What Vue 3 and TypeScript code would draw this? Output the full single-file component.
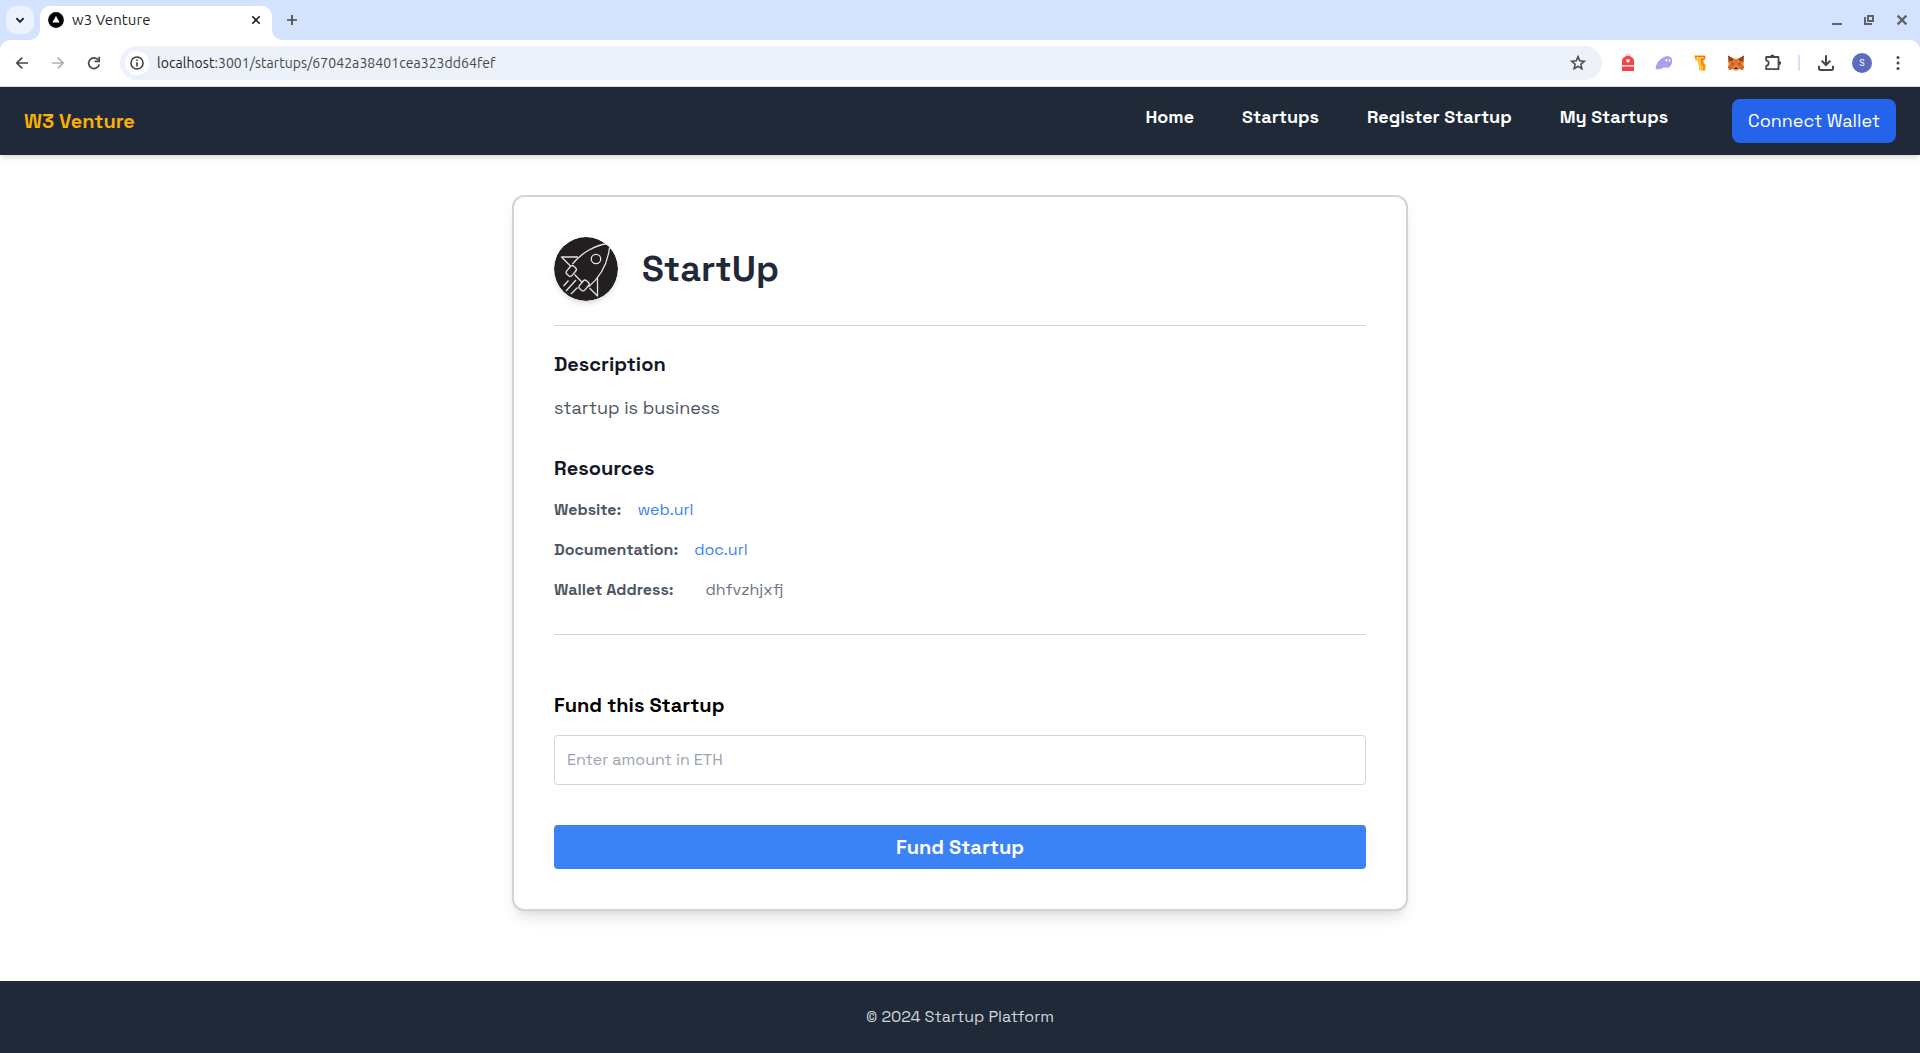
<script setup lang="ts">
import { ref } from 'vue'

const links: string[] = ['Home', 'Startups', 'Register Startup', 'My Startups']

const amount = ref('')
</script>

<template>
  <div class="window">
    <div class="tabstrip">
      <button class="tab-search" aria-label="Search tabs">
        <svg width="12" height="12" viewBox="0 0 12 12"><path d="M2.4 4.2 6 7.8l3.6-3.6" fill="none" stroke="#1f1f1f" stroke-width="1.9" /></svg>
      </button>
      <div class="tab">
        <svg class="favicon" width="16" height="16" viewBox="0 0 16 16"><circle cx="8" cy="8" r="7.9" fill="#000" /><path d="M8 4.1 11.7 10.6H4.3Z" fill="#fff" /></svg>
        <span class="tab-title">w3 Venture</span>
        <svg class="tab-close" width="12" height="12" viewBox="0 0 12 12"><path d="m2.3 2.3 7.4 7.4M9.7 2.3 2.3 9.7" stroke="#1f1f1f" stroke-width="1.6" /></svg>
      </div>
      <svg class="new-tab" width="12" height="12" viewBox="0 0 12 12"><path d="M6 1v10M1 6h10" stroke="#474747" stroke-width="1.7" /></svg>
      <div class="controls">
        <svg width="12" height="12" viewBox="0 0 12 12"><path d="M1 10h10" stroke="#5f6368" stroke-width="2" /></svg>
        <svg width="12" height="12" viewBox="0 0 12 12"><path d="M5 2h5v5H5Z" fill="none" stroke="#5f6368" stroke-width="2" /><path d="M2 3v7h7" fill="none" stroke="#5f6368" stroke-width="2" /></svg>
        <svg width="12" height="12" viewBox="0 0 12 12"><path d="m1.600 1.600 8.800 8.800M10.400 1.600 1.600 10.400" stroke="#5f6368" stroke-width="2.200" /></svg>
      </div>
    </div>

    <div class="toolbar-wrap">
      <div class="toolbar">
        <span class="slot"><svg width="16" height="16" viewBox="0 0 16 16"><path d="M14 8H3M8.200 2.600 2.800 8l5.400 5.400" fill="none" stroke="#474747" stroke-width="1.700" /></svg></span>
        <span class="slot"><svg width="16" height="16" viewBox="0 0 16 16"><path d="M2 8h11M7.800 2.600 13.200 8l-5.400 5.400" fill="none" stroke="#b0b0b0" stroke-width="1.700" /></svg></span>
        <span class="slot"><svg width="16" height="16" viewBox="0 0 16 16"><path d="M12.400 5A5.400 5.400 0 1 0 13.300 9.400" fill="none" stroke="#474747" stroke-width="1.700" /><path d="M13.200 1.700v4.600H8.600" fill="none" stroke="#474747" stroke-width="1.700" /></svg></span>
        <div class="omnibox">
          <span class="info"><svg width="16" height="16" viewBox="0 0 16 16"><circle cx="8" cy="8" r="6.100" fill="none" stroke="#3c3c3c" stroke-width="1.500" /><path d="M8 7.200v4.200M8 4.400v1.600" stroke="#3c3c3c" stroke-width="1.600" /></svg></span>
          <span class="url"><span class="host">localhost</span>:3001/startups/67042a38401cea323dd64fef</span>
          <svg class="star" width="18" height="18" viewBox="0 0 18 18"><path d="m9 2.600 1.750 4.250 4.550.4-3.450 3 1.050 4.450L9 12.300l-3.900 2.400 1.050-4.450-3.450-3 4.550-.4Z" fill="none" stroke="#474747" stroke-width="1.500" /></svg>
        </div>
        <span class="slot"><svg width="16" height="18" viewBox="0 0 16 18"><path d="M5.500 1h5" stroke="#f08a90" stroke-width="1" /><path d="M2 11V7.500C2 4.800 3.500 3 5.500 2.800V2h5v.8C12.500 3 14 4.800 14 7.500V11Z" fill="#f4434a" /><path d="M2 12.500h12V17H2Z" fill="#f4434a" /><circle cx="8" cy="6.700" r="1.800" fill="#fff" /><path d="M2 11.700h12" stroke="#f9c3c6" stroke-width="1" /></svg></span>
        <span class="slot"><svg width="18" height="16" viewBox="0 0 18 16"><path d="M17.200 5.500c0 5-3.200 7.700-5.200 7.400-.8-.1-1-.7-1.200-1.100-.9 1.300-2 1.600-2.900.8-.9 1.300-1.800 1.900-2.800 1.100-1.400 1.200-4.400 1.300-4.400-1.100C.7 8.500 6.300 1.200 12.500 1.200c3 0 4.700 1.700 4.700 4.300Z" fill="#ab9ff2" /><ellipse cx="11.300" cy="5.300" rx=".9" ry="1.300" fill="#fff" /><ellipse cx="14.500" cy="5.300" rx=".9" ry="1.300" fill="#fff" /></svg></span>
        <span class="slot"><svg width="16" height="18" viewBox="0 0 16 18"><path d="M2.500 1.500h11l-.4 4-1.500.8.2 2.700 1.900 1.600-.4 6H7.500L7 11.800l-.9-2.300.4-2.500-3.500-.9Z" fill="#ffa51f" /><path d="m3 2.300 9.800.2-.6 2.300-2.400.6.300 4.500 2 1.600-.4 4.400" fill="none" stroke="#f9652a" stroke-width="1" /><path d="m3.800 4.800 4.200.5-.3 4.500 1.100 5.800M5 3.500l6.300.2M10.200 11.500l.4 4" fill="none" stroke="#ffe03b" stroke-width="1.100" /></svg></span>
        <span class="slot"><svg width="18" height="18" viewBox="0 0 18 18"><path d="m1 1.500 5.700 3.200h4.600L17 1.500v6l-.9 2.900.9 3-1.300 2.600-3.400-1-2 1.600H7.700l-2-1.600-3.400 1L1 13.400l.9-3L1 7.500Z" fill="#e8752b" /><path d="m1 1.500 5.700 3.200L5 7.400 2 7ZM17 1.500l-5.700 3.200L13 7.400l3-.4Z" fill="#8a4a2a" /><path d="m1.900 10.400 3.300.3.500 4-3.400 1.300L1 13.400ZM16.100 10.400l-3.300.3-.5 4 3.400 1.300 1.300-2.600Z" fill="#d96a22" /><path d="m5 9 2.200 1-1.800.8ZM13 9l-2.200 1 1.800.8Z" fill="#233447" /><path d="M7.200 12.800h3.600l.4 2-1 .8H7.800l-1-.8Z" fill="#d9c7b6" /><path d="M7.600 13.500h2.800l.3 1.500H7.300Z" fill="#161616" /></svg></span>
        <span class="slot"><svg class="puzzle" width="20" height="20" viewBox="0 0 20 20"><path d="M3.200 4h12.300v12.200H3.200v-3.400c3.300-.6 3.300-4.800 0-5.400Z" fill="none" stroke="#474747" stroke-width="1.800" stroke-linejoin="round" /><path d="M7.200 3.500a2.100 2.100 0 0 1 4.200 0ZM16 8a2.100 2.100 0 0 1 0 4.200Z" fill="#474747" /></svg></span>
        <span class="slot sep"><i></i></span>
        <span class="slot"><svg width="18" height="18" viewBox="0 0 18 18"><path d="M9 1.200v9.600M4.700 6.700 9 11l4.300-4.300" fill="none" stroke="#474747" stroke-width="2" /><path d="M2 11.700v2.800a1.400 1.400 0 0 0 1.400 1.400h11.200a1.400 1.400 0 0 0 1.400-1.400v-2.800" fill="none" stroke="#474747" stroke-width="2" /></svg></span>
        <span class="slot"><span class="avatar">S</span></span>
        <span class="slot"><svg width="4" height="16" viewBox="0 0 4 16"><circle cx="2" cy="2.500" r="1.500" fill="#474747" /><circle cx="2" cy="8" r="1.500" fill="#474747" /><circle cx="2" cy="13.500" r="1.500" fill="#474747" /></svg></span>
      </div>
    </div>

    <header class="navbar">
      <a class="brand">W3 Venture</a>
      <nav class="links">
        <a v-for="link in links" :key="link">{{ link }}</a>
      </nav>
      <button class="connect">Connect Wallet</button>
    </header>

    <main class="page">
      <section class="card">
        <div class="head">
          <svg class="logo" width="64" height="64" viewBox="0 0 64 64">
            <circle cx="32" cy="32" r="32" fill="#231f20" />
            <g fill="none" stroke="#e4e4e4" stroke-width="1.300" stroke-linejoin="round">
              <path d="M18.500 27C27 16.500 40 8.500 53.500 6.500" />
              <path d="M55.500 10.500C53.800 25 47 39.500 34.500 50" />
              <path d="M24 20H7.500l8.700 8.700" />
              <path d="M43.500 41v18L35.500 51" />
              <path d="m20.500 37.500 8 8.200" />
              <rect x="12" y="30.500" width="10.500" height="7" rx="2.400" transform="rotate(-50 17.200 34)" />
              <rect x="24.800" y="45" width="10.500" height="7" rx="2.400" transform="rotate(-50 30 48.500)" />
              <circle cx="42" cy="22" r="4.700" />
              <path d="m14.500 43.500-5 5.500M22 43 12 54M23.500 50.500 17 57" />
            </g>
          </svg>
          <h1>StartUp</h1>
        </div>

        <h2 class="t-description">Description</h2>
        <p class="description">startup is business</p>

        <h2 class="t-resources">Resources</h2>
        <div class="rows">
          <div class="row"><strong>Website:</strong><a>web.url</a></div>
          <div class="row"><strong>Documentation:</strong><a>doc.url</a></div>
          <div class="row"><strong>Wallet Address:</strong><span class="wallet">dhfvzhjxfj</span></div>
        </div>

        <form class="fund" @submit.prevent>
          <h2>Fund this Startup</h2>
          <input v-model="amount" type="text" placeholder="Enter amount in ETH" />
          <button type="submit">Fund Startup</button>
        </form>
      </section>
    </main>

    <footer class="footer">© 2024 Startup Platform</footer>
  </div>
</template>

<style>
body {
  margin: 0;
  background: #fff;
  overflow: hidden;
}
</style>

<style scoped>
* {
  box-sizing: border-box;
}
.window {
  display: flex;
  flex-direction: column;
  height: 1053px;
  font-family: "Space Grotesk", Inter, "Liberation Sans", sans-serif;
  font-size: 16px;
  line-height: 24px;
  color: #000;
}
svg {
  display: block;
  flex: none;
}
h1, h2, p {
  margin: 0;
}
button, input {
  font-family: inherit;
  border: 0;
}

/* browser frame */
.tabstrip {
  display: flex;
  height: 40px;
  padding: 6px 12px 0 6px;
  background: #d3e2fd;
}
.tab-search {
  display: grid;
  place-items: center;
  width: 28px;
  height: 28px;
  padding: 0;
  border-radius: 10px;
  background: #ecf2fe;
}
.tab {
  position: relative;
  display: flex;
  align-items: center;
  width: 232px;
  height: 34px;
  margin-left: 6px;
  padding: 0 10px 6px 8px;
  border-radius: 10px 10px 0 0;
  background: #fff;
}
.tab::before,
.tab::after {
  content: "";
  position: absolute;
  bottom: 0;
  width: 10px;
  height: 10px;
}
.tab::before {
  left: -10px;
  background: radial-gradient(circle at 0 0, transparent 9.5px, #fff 10px);
}
.tab::after {
  right: -10px;
  background: radial-gradient(circle at 100% 0, transparent 9.5px, #fff 10px);
}
.tab-title {
  flex: 1;
  margin-left: 8px;
  font: 15px/20px Ubuntu, "Noto Sans", sans-serif;
  letter-spacing: 0.08px;
  color: #1f1f1f;
}
.new-tab {
  margin: 8px 0 0 14px;
}
.controls {
  display: flex;
  gap: 20px;
  margin: 8px 0 0 auto;
}
.controls svg:last-child {
  margin-left: 1px;
}
.toolbar-wrap {
  background: #d3e2fd;
}
.toolbar {
  display: flex;
  align-items: center;
  height: 47px;
  padding: 0 4px;
  border-bottom: 1px solid #dcdddf;
  border-radius: 10px 10px 0 0;
  background: #fff;
}
.slot {
  display: grid;
  place-items: center;
  width: 36px;
  height: 34px;
}
.puzzle {
  margin-left: 1px;
}
.slot.sep {
  width: 18px;
}
.sep i {
  width: 2px;
  height: 16px;
  border-radius: 1px;
  background: #d3e2fd;
}
.omnibox {
  display: flex;
  flex: 1;
  align-items: center;
  height: 34px;
  margin: 0 8px;
  padding: 0 15px 0 5px;
  border-radius: 17px;
  background: #ecf1fa;
}
.info {
  display: grid;
  place-items: center;
  width: 24px;
  height: 24px;
  border-radius: 50%;
  background: #fff;
}
.url {
  flex: 1;
  margin-left: 8px;
  font: 14px/20px Ubuntu, "Noto Sans", sans-serif;
  letter-spacing: 0.055px;
  color: #474747;
}
.host {
  color: #1f1f1f;
}
.avatar {
  width: 20px;
  height: 20px;
  border-radius: 50%;
  background: #5c6bc0;
  color: #fff;
  font: 9px/20px Roboto, sans-serif;
  text-align: center;
}

/* site header */
.navbar {
  position: relative;
  display: flex;
  align-items: center;
  flex: none;
  height: 68px;
  padding: 0 24px;
  background: #1f2937;
  box-shadow: 0 4px 6px -1px rgba(0, 0, 0, 0.1), 0 2px 4px -2px rgba(0, 0, 0, 0.1);
}
.brand {
  font-size: 20px;
  font-weight: 700;
  line-height: 28px;
  color: #fab005;
}
.links {
  display: flex;
  gap: 48px;
  margin: 0 64px 8px auto;
  font-size: 18px;
  font-weight: 600;
  line-height: 28px;
  color: #fff;
}
.connect {
  padding: 8px 16px;
  border-radius: 8px;
  background: #2563eb;
  color: #fff;
  font-size: 18px;
  line-height: 28px;
}

/* startup details */
.page {
  flex: 1;
  padding-top: 40px;
}
.card {
  width: 896px;
  margin: 0 auto;
  padding: 40px;
  border: 2px solid #d1d5db;
  border-radius: 12px;
  background: #fff;
  box-shadow: 0 10px 15px -3px rgba(0, 0, 0, 0.1), 0 4px 6px -4px rgba(0, 0, 0, 0.1);
}
.head {
  display: flex;
  align-items: center;
  gap: 24px;
  padding-bottom: 24px;
  border-bottom: 1px solid #d1d5db;
}
.logo {
  border-radius: 50%;
  box-shadow: 0 4px 6px -1px rgba(0, 0, 0, 0.1), 0 2px 4px -2px rgba(0, 0, 0, 0.1);
}
h1 {
  font-size: 36px;
  font-weight: 600;
  line-height: 40px;
  color: #1f2937;
}
h2 {
  font-size: 20px;
  font-weight: 600;
  line-height: 28px;
}
.t-description {
  margin-top: 24px;
  color: #111827;
}
.description {
  margin-top: 16px;
  font-size: 18px;
  line-height: 28px;
  color: #4b5563;
}
.t-resources {
  margin-top: 32px;
  color: #111827;
}
.rows {
  display: flex;
  flex-direction: column;
  gap: 16px;
  margin-top: 16px;
  padding-bottom: 32px;
  border-bottom: 1px solid #d1d5db;
}
.row {
  display: flex;
  gap: 16px;
}
.row strong {
  font-weight: 600;
  color: #4b5563;
}
.row a {
  color: #3b82f6;
}
.wallet {
  margin-left: 16px;
  color: #6b7280;
}
.fund {
  display: flex;
  flex-direction: column;
  margin-top: 56px;
}
.fund input {
  height: 50px;
  margin-top: 16px;
  padding: 11px 12px 13px;
  border: 1px solid #d1d5db;
  border-radius: 4px;
  font-size: 16px;
  line-height: 24px;
}
.fund input::placeholder {
  color: #9ca3af;
}
.fund button {
  margin-top: 40px;
  padding: 8px;
  border-radius: 4px;
  background: #3b82f6;
  color: #fff;
  font-size: 20px;
  font-weight: 600;
  line-height: 28px;
}
.footer {
  display: flex;
  align-items: center;
  justify-content: center;
  flex: none;
  height: 72px;
  background: #1f2937;
  color: #d1d5db;
}
</style>
